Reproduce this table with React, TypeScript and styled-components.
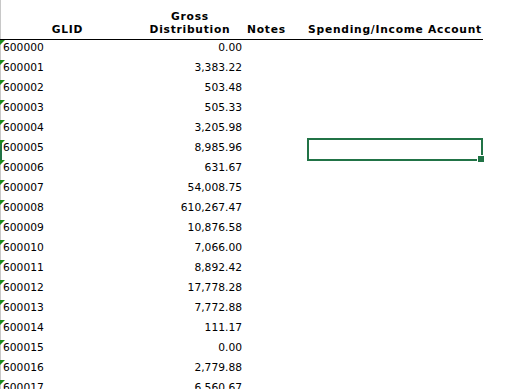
import React from "react";
import styled, { createGlobalStyle } from "styled-components";

const Global = createGlobalStyle`
  html, body { margin: 0; padding: 0; background: #fff; overflow: hidden; }
  body { font-family: "DejaVu Sans", Verdana, sans-serif; font-size: 10.7px; color: #000; }
`;

const COLS = "135px 110px 62px 176px";

const Sheet = styled.div`
  display: flex;
  flex-direction: column;
  width: 515px;
  height: 389px;
  overflow: hidden;
  box-shadow: inset 1px 0 #c8c8c8;
`;

const HeaderRow = styled.div`
  display: grid;
  grid-template-columns: ${COLS};
  width: 483px;
  height: 40px;
  flex: none;
  box-sizing: border-box;
  border-bottom: 1px solid #000;
`;

const HeadCell = styled.div<{ $align: "left" | "center" }>`
  display: flex;
  flex-direction: column;
  justify-content: flex-end;
  text-align: ${(p) => p.$align};
  padding-left: ${(p) => (p.$align === "left" ? "2px" : "0")};
  padding-bottom: 3px;
  font-weight: bold;
  letter-spacing: 0.75px;
  line-height: 13px;
  white-space: nowrap;
`;

const Row = styled.div<{ $active?: boolean }>`
  display: grid;
  grid-template-columns: ${COLS};
  height: 20px;
  flex: none;
  box-shadow: ${(p) => (p.$active ? "inset 2px 0 #217346" : "none")};
`;

const IdCell = styled.div`
  position: relative;
  padding: 1px 0 0 3px;
  line-height: 13px;
  &::before {
    content: "";
    position: absolute;
    left: 0;
    top: 0;
    border-top: 5px solid #1a8a1a;
    border-right: 5px solid transparent;
  }
`;

const AmountCell = styled.div`
  padding: 1px 3px 0 0;
  line-height: 13px;
  text-align: right;
`;

const Cell = styled.div`
  position: relative;
`;

const Selection = styled.div`
  position: absolute;
  left: 0;
  top: -2px;
  width: 176px;
  height: 23px;
  box-sizing: border-box;
  border: 2px solid #217346;
`;

const FillHandle = styled.div`
  position: absolute;
  left: 171px;
  top: 16px;
  width: 6px;
  height: 6px;
  background: #217346;
  box-shadow: 0 0 0 1px #fff;
`;

const data: [string, string][] = [
  ["600000", "0.00"],
  ["600001", "3,383.22"],
  ["600002", "503.48"],
  ["600003", "505.33"],
  ["600004", "3,205.98"],
  ["600005", "8,985.96"],
  ["600006", "631.67"],
  ["600007", "54,008.75"],
  ["600008", "610,267.47"],
  ["600009", "10,876.58"],
  ["600010", "7,066.00"],
  ["600011", "8,892.42"],
  ["600012", "17,778.28"],
  ["600013", "7,772.88"],
  ["600014", "111.17"],
  ["600015", "0.00"],
  ["600016", "2,779.88"],
  ["600017", "6,560.67"],
];

export default function App() {
  return (
    <>
      <Global />
      <Sheet>
        <HeaderRow>
          <HeadCell $align="center">GLID</HeadCell>
          <HeadCell $align="center">
            <span>Gross</span>
            <span>Distribution</span>
          </HeadCell>
          <HeadCell $align="left">Notes</HeadCell>
          <HeadCell $align="center">Spending/Income Account</HeadCell>
        </HeaderRow>
        {data.map(([id, amt], i) => (
          <Row key={id} $active={i === 5}>
            <IdCell>{id}</IdCell>
            <AmountCell>{amt}</AmountCell>
            <Cell />
            <Cell>
              {i === 5 && (
                <>
                  <Selection />
                  <FillHandle />
                </>
              )}
            </Cell>
          </Row>
        ))}
      </Sheet>
    </>
  );
}
